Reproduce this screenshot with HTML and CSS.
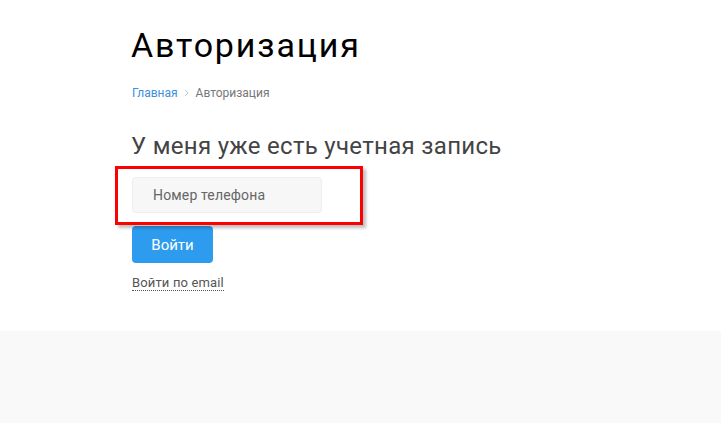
FILE: index.html
```html
<!DOCTYPE html>
<html>
<head>
    <title>Авторизация</title>
    <link rel="stylesheet" href="styles.css">
</head>
<body>
    <div class="page">
        <div class="container">
            <h1>Авторизация</h1>
            <div class="breadcrumbs">
                <a href="#">Главная</a>
                <svg class="sep" width="5" height="8" viewBox="0 0 5 8"><path d="M1 1l3 3-3 3" fill="none" stroke="#c4c4c4" stroke-width="1"/></svg>
                <span>Авторизация</span>
            </div>

            <h2>У меня уже есть учетная запись</h2>
            <div class="field">
                <input type="text" placeholder="Номер телефона">
                <div class="highlight"></div>
            </div>
            <button>Войти</button>
            <div class="alt-login">
                <a href="#">Войти по email</a>
            </div>
        </div>
    </div>
    <div class="footer"></div>
</body>
</html>
```

FILE: styles.css
```css
body { margin: 0; font-family: Roboto, "Noto Sans", sans-serif; background: #fff; }
.page { height: 331px; }
.container { width: 457px; margin: 0 auto; padding-top: 25px; }
h1 {
    margin: 0 0 0 -1px;
    font-size: 34px;
    line-height: 40px;
    font-weight: 400;
    letter-spacing: 1.85px;
    color: #000;
}
.breadcrumbs {
    margin-top: 20px;
    font-size: 12px;
    line-height: 16px;
    color: #777;
}
.breadcrumbs a { color: #3d8fdc; text-decoration: none; }
.breadcrumbs .sep { margin: 0 4px 0 3px; }
h2 {
    margin: 31px 0 0 -1px;
    font-size: 24px;
    line-height: 28px;
    font-weight: 400;
    letter-spacing: 0.3px;
    color: #444;
}
.field { position: relative; margin-top: 17px; width: 190px; }
input {
    box-sizing: border-box;
    width: 190px;
    height: 36px;
    padding: 0 20px;
    font-family: inherit;
    font-size: 14px;
    letter-spacing: 0.15px;
    background: #f7f7f7;
    border: 1px solid #eee;
    border-radius: 4px;
    outline: none;
}
input::placeholder { color: #666; }
.highlight {
    position: absolute;
    top: -11px;
    left: -17px;
    width: 242px;
    height: 53px;
    border: 3px solid #f00;
    box-shadow: 3px 3px 3px rgba(0,0,0,0.25);
    pointer-events: none;
}
button {
    margin-top: 13px;
    width: 81px;
    height: 37px;
    padding: 0;
    background: #2d9cee;
    color: #fff;
    border: none;
    border-radius: 4px;
    font-family: inherit;
    font-size: 15px;
    cursor: pointer;
}
.alt-login { margin-top: 12px; font-size: 13px; line-height: 16px; letter-spacing: 0.15px; }
.alt-login a {
    color: #555;
    text-decoration: none;
    border-bottom: 1px dotted #555;
}
.footer { height: 92px; background: #f9f9f9; }
```
